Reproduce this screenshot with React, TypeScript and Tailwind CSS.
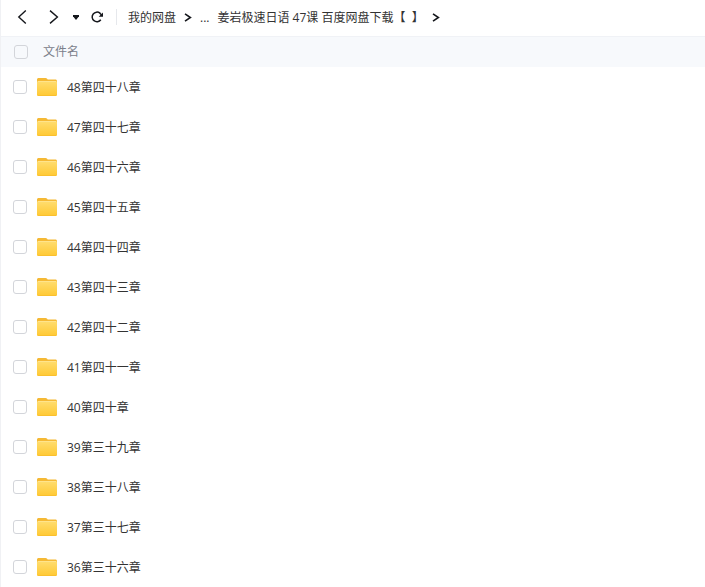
import { useState } from 'react'

const folders = [
  '48第四十八章',
  '47第四十七章',
  '46第四十六章',
  '45第四十五章',
  '44第四十四章',
  '43第四十三章',
  '42第四十二章',
  '41第四十一章',
  '40第四十章',
  '39第三十九章',
  '38第三十八章',
  '37第三十七章',
  '36第三十六章',
]

const checkboxClass =
  'block h-3.5 w-3.5 appearance-none rounded-[3px] border border-[#d3d5da] checked:border-[#06a7ff] checked:bg-[#06a7ff]'

const FolderIcon = () => (
  <svg width="20" height="18" viewBox="0 0 20 18" className="shrink-0" aria-hidden="true">
    <defs>
      <linearGradient id="folderFront" x1="0" y1="0" x2="0" y2="1">
        <stop offset="0" stopColor="#ffdd70" />
        <stop offset="1" stopColor="#ffc933" />
      </linearGradient>
    </defs>
    <path
      d="M0 1.6C0 .7.7 0 1.6 0h7c.6 0 1 .2 1.3.6l.8.9h7.7c.9 0 1.6.7 1.6 1.6V9H0z"
      fill="#f5b935"
    />
    <path
      d="M0 4.4c0-.8.6-1.4 1.4-1.4h17.2c.8 0 1.4.6 1.4 1.4v12c0 .9-.7 1.6-1.6 1.6H1.6C.7 18 0 17.3 0 16.4z"
      fill="url(#folderFront)"
    />
    <path d="M1 3.5h18" stroke="#ffe48c" strokeWidth="1" />
    <path d="M.6 17.1c.3.4.6.5 1 .5h16.8c.4 0 .7-.1 1-.5" stroke="#f7bb2c" strokeWidth=".8" fill="none" />
  </svg>
)

const Separator = () => (
  <svg width="8" height="9" viewBox="0 0 8 9" fill="none" className="shrink-0" aria-hidden="true">
    <path d="M1 .8l5.4 3.7L1 8.2" stroke="#15171c" strokeWidth="1.6" />
  </svg>
)

export default function App() {
  const [selected, setSelected] = useState<string[]>([])

  const toggle = (name: string) => {
    setSelected((prev) =>
      prev.includes(name) ? prev.filter((item) => item !== name) : [...prev, name]
    )
  }

  return (
    <div className="min-h-screen border-l border-[#f0f1f4] bg-white font-['Open_Sans','Noto_Sans_CJK_SC',sans-serif] text-xs text-[#333]">
      {/* Navigation */}
      <header className="flex h-9 items-center pb-0.5 pl-4">
        <button type="button" aria-label="后退" className="flex">
          <svg width="10" height="14" viewBox="0 0 10 14" fill="none">
            <path d="M8.8.6L1.8 7l7 6.4" stroke="#15171c" strokeWidth="1.4" />
          </svg>
        </button>
        <button type="button" aria-label="前进" className="ml-5 flex">
          <svg width="12" height="14" viewBox="0 0 12 14" fill="none">
            <path d="M3 .6L10.4 7 3 13.4" stroke="#15171c" strokeWidth="1.4" />
          </svg>
        </button>
        <button type="button" aria-label="历史记录" className="ml-3.5 flex">
          <svg width="6" height="5" viewBox="0 0 6 5">
            <path d="M0 0h6v1.2L3 5 0 1.2z" fill="#15171c" />
          </svg>
        </button>
        <button type="button" aria-label="刷新" className="ml-3 flex">
          <svg width="13" height="12" viewBox="0 0 13 12" fill="none">
            <path d="M9 2.2A4.8 4.8 0 1 0 9.8 8.8" stroke="#15171c" strokeWidth="1.5" />
            <path d="M12 1.6v4.1H7.7z" fill="#15171c" />
            <path d="M8.6 1.9l2 2" stroke="#15171c" strokeWidth="1.4" />
          </svg>
        </button>
        <span className="ml-3 h-4 w-px bg-[#e6e8ec]" />
        <nav aria-label="路径" className="ml-[11px] flex items-center gap-2 whitespace-nowrap">
          <a href="#root" className="pt-0.5">我的网盘</a>
          <Separator />
          <a href="#more" className="pt-0.5">...</a>
          <a href="#folder" className="pt-0.5">姜岩极速日语 47课 百度网盘下载【&nbsp;&nbsp;】</a>
          <Separator />
        </nav>
      </header>

      {/* File list */}
      <table className="w-full table-fixed border-separate border-spacing-0 text-left">
        <thead>
          <tr className="h-[31px] bg-[#f7f9fc]">
            <th className="w-9 border-t border-[#f0f2f6] p-0 pl-[13px]">
              <input
                type="checkbox"
                aria-label="全选"
                checked={selected.length === folders.length}
                onChange={(e) => setSelected(e.target.checked ? folders : [])}
                className={checkboxClass}
              />
            </th>
            <th className="border-t border-[#f0f2f6] p-0 pl-1.5 font-normal text-[#7b808a]">
              文件名
            </th>
          </tr>
        </thead>
        <tbody>
          {folders.map((name) => (
            <tr key={name} className="h-10 hover:bg-[#f7f9fc]">
              <td className="p-0 pl-3">
                <input
                  type="checkbox"
                  id={name}
                  checked={selected.includes(name)}
                  onChange={() => toggle(name)}
                  className={checkboxClass}
                />
              </td>
              <td className="p-0">
                <label htmlFor={name} className="flex items-center gap-2.5">
                  <FolderIcon />
                  <span className="pt-0.5">{name}</span>
                </label>
              </td>
            </tr>
          ))}
        </tbody>
      </table>
    </div>
  )
}
